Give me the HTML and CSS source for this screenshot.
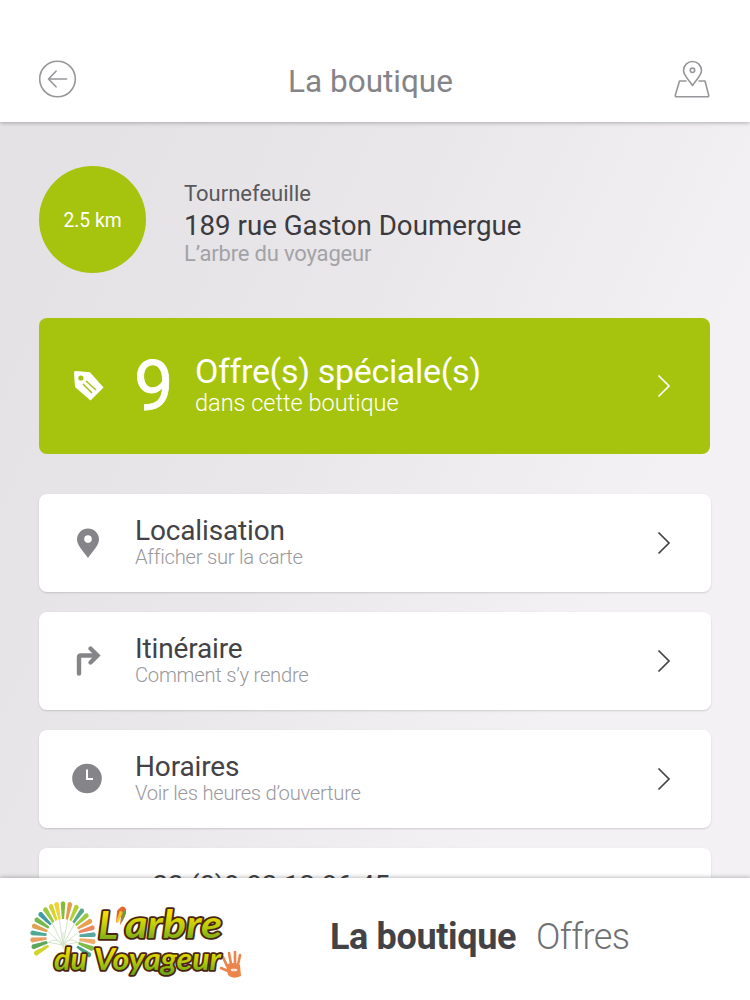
FILE: index.html
```html
<!DOCTYPE html>
<html lang="fr">
  <head>
    <meta charset="UTF-8" />
    <meta name="viewport" content="width=device-width, initial-scale=1.0" />
    <title>La boutique</title>
    <link rel="stylesheet" href="styles.css">
  </head>
  <body>
    <header class="topbar">
      <a href="#" class="back">
        <svg width="38" height="38" viewBox="0 0 38 38">
          <circle cx="18.5" cy="19" r="17.8" />
          <path d="M27.5 19H9.5M17 11.2L9.5 19l7.5 7.8" />
        </svg>
      </a>
      <h1>La boutique</h1>
      <a href="#" class="map">
        <svg width="36" height="38" viewBox="0 0 36 38">
          <path d="M12 21H5.5L1.3 35.2q-.3 1.6 1.2 1.6h31q1.5 0 1.2-1.6L31 21h-6" />
          <path d="M18.5 25.5C15 20.5 9.5 15 9.5 10.5a9 9 0 0 1 18 0c0 4.500-5.5 10-9 15z" />
          <circle cx="18.5" cy="10.3" r="2.2" />
        </svg>
      </a>
    </header>

    <main class="content">
      <section class="shop">
        <div class="distance">2.5 km</div>
        <div class="address">
          <p class="city">Tournefeuille</p>
          <p class="street">189 rue Gaston Doumergue</p>
          <p class="name">L’arbre du voyageur</p>
        </div>
      </section>

      <a href="#" class="offers">
        <svg class="tag" width="32" height="32" viewBox="0 0 32 32">
          <path fill="#fff" d="M1 2.5Q1 1 2.5 1L17 2.2 30.5 17.5 17.5 30.5 2 17z" />
          <circle cx="7.9" cy="8" r="2.6" fill="#a6c30e" />
          <path d="M13 11l10 9M10 14l9 9" stroke="#a6c30e" stroke-width="1.5" />
        </svg>
        <span class="count">9</span>
        <span class="text">
          <strong>Offre(s) spéciale(s)</strong>
          <small>dans cette boutique</small>
        </span>
        <svg class="arrow" width="14" height="24" viewBox="0 0 14 24"><path d="M1.5 1.5L12 12 1.5 22.5" /></svg>
      </a>

      <ul class="menu">
        <li>
          <a href="#">
            <svg class="icon" width="32" height="32" viewBox="0 0 32 32">
              <path fill-rule="evenodd" d="M17 1.5a11 11 0 0 1 11 11c0 6-6.5 12-11 18.5C12.5 24.5 6 18.5 6 12.5a11 11 0 0 1 11-11zM17 8.3a3.8 3.8 0 1 0 0 7.6 3.8 3.8 0 0 0 0-7.6z" />
            </svg>
            <span class="text"><strong>Localisation</strong><small>Afficher sur la carte</small></span>
            <svg class="arrow" width="14" height="24" viewBox="0 0 14 24"><path d="M1.5 1.5L12 12 1.5 22.5" /></svg>
          </a>
        </li>
        <li>
          <a href="#">
            <svg class="icon line" width="32" height="32" viewBox="0 0 32 32">
              <path d="M8 28.5V12.5q0-2 2-2H26" />
              <path d="M19.5 3.5L26.5 10.5 19.5 17.5" />
            </svg>
            <span class="text"><strong>Itinéraire</strong><small>Comment s’y rendre</small></span>
            <svg class="arrow" width="14" height="24" viewBox="0 0 14 24"><path d="M1.5 1.5L12 12 1.5 22.5" /></svg>
          </a>
        </li>
        <li>
          <a href="#">
            <svg class="icon" width="32" height="32" viewBox="0 0 32 32">
              <circle cx="16" cy="15.5" r="14.8" />
              <path d="M16 6.5V16h6" fill="none" stroke="#fff" stroke-width="2" />
            </svg>
            <span class="text"><strong>Horaires</strong><small>Voir les heures d’ouverture</small></span>
            <svg class="arrow" width="14" height="24" viewBox="0 0 14 24"><path d="M1.5 1.5L12 12 1.5 22.5" /></svg>
          </a>
        </li>
        <li>
          <a href="#" class="phone">+33 (0)9 83 12 86 45</a>
        </li>
      </ul>
    </main>

    <footer class="tabs">
      <svg class="logo" width="216" height="84" viewBox="0 0 216 84">
        <defs>
          <linearGradient id="leaf" x1="0" y1="0" x2="0" y2="1">
            <stop offset=".3" stop-color="#f3dc00" />
            <stop offset=".6" stop-color="#b5ca0a" />
            <stop offset=".9" stop-color="#6ba51c" />
          </linearGradient>
          <path id="ray" d="M-1.2-18L-2.5-34Q0-37.5 2.5-34L1.2-18z" />
        </defs>
        <!-- palm -->
        <g transform="translate(35 40)">
          <g class="stems">
            <path d="M0 8L-18-8M0 8L-12-16M0 8L-4-20M0 8L5-20M0 8L13-16M0 8L19-8M0 8L-22 4M0 8L22 4M0 12V-5" />
            <path d="M-20 10Q-6-4 0 10Q6-4 20 10" />
          </g>
          <g class="palm" transform="scale(.92 1)">
            <use href="#ray" fill="#d2d32b" transform="rotate(-119)" />
            <use href="#ray" fill="#5da75b" transform="rotate(-107)" />
            <use href="#ray" fill="#e8a064" transform="rotate(-95)" />
            <use href="#ray" fill="#4ca996" transform="rotate(-83)" />
            <use href="#ray" fill="#e0a34f" transform="rotate(-71)" />
            <use href="#ray" fill="#75b94b" transform="rotate(-59)" />
            <use href="#ray" fill="#3f9da0" transform="rotate(-47)" />
            <use href="#ray" fill="#9bc93d" transform="rotate(-35)" />
            <use href="#ray" fill="#d8d232" transform="rotate(-23)" />
            <use href="#ray" fill="#f0d431" transform="rotate(-12)" />
            <use href="#ray" fill="#84bc3a" />
            <use href="#ray" fill="#e79a4d" transform="rotate(13)" />
            <use href="#ray" fill="#b4cf35" transform="rotate(26)" />
            <use href="#ray" fill="#56a987" transform="rotate(38)" />
            <use href="#ray" fill="#9bca42" transform="rotate(50)" />
            <use href="#ray" fill="#e8a04f" transform="rotate(62)" />
            <use href="#ray" fill="#ed865c" transform="rotate(74)" />
            <use href="#ray" fill="#55a8a0" transform="rotate(86)" />
            <use href="#ray" fill="#efad69" transform="rotate(98)" />
            <use href="#ray" fill="#7dbb46" transform="rotate(110)" />
            <use href="#ray" fill="#47a17e" transform="rotate(122)" />
          </g>
        </g>
        <!-- hand -->
        <g class="hand">
          <path d="M199 69L195 60M203 67L201 56M207 67V55M210 68L212 58M200 74L193 71" />
          <path class="palm-fill" d="M198 68q7-4 14 0l1 11q-8 4-13-1z" />
          <path d="M204 73h4" stroke="#fbe3d2" />
        </g>
        <g class="lettering">
          <text x="70" y="42" textLength="20" lengthAdjust="spacingAndGlyphs">L</text>
          <text x="97" y="41" textLength="97" lengthAdjust="spacingAndGlyphs">arbre</text>
          <text class="second" x="26" y="73" textLength="33" lengthAdjust="spacingAndGlyphs">du</text>
          <text class="second" x="66" y="73" textLength="127" lengthAdjust="spacingAndGlyphs">Voyageur</text>
        </g>
        <!-- parrot used as the apostrophe -->
        <g>
          <path d="M89 14q6-8 9-2 1 6-6 16l1-9-5 7z" fill="#e5672e" />
          <path d="M92 14l3 1-5 11-2-1z" fill="#efcc25" />
          <path d="M95 12l3 4-4 9z" fill="#56a345" />
        </g>
      </svg>
      <nav>
        <a href="#" class="active">La boutique</a>
        <a href="#">Offres</a>
      </nav>
    </footer>
  </body>
</html>
```
FILE: styles.css
```css
* {
  margin: 0;
  padding: 0;
  box-sizing: border-box;
}
body {
  display: flex;
  flex-direction: column;
  height: 1000px;
  overflow: hidden;
  font-family: Roboto, "Liberation Sans", sans-serif;
  background-color: #fff;
}
a {
  text-decoration: none;
  color: #434246;
}
li {
  list-style: none;
}
svg {
  display: block;
  flex-shrink: 0;
}

/* header */
.topbar {
  z-index: 1;
  display: flex;
  justify-content: space-between;
  height: 122px;
  padding: 60px 40px 0 39px;
  background-color: #fff;
  box-shadow: 0 1px 4px rgba(0, 0, 0, 0.28);
}
.topbar svg {
  fill: none;
  stroke: #97969a;
  stroke-width: 1.6;
  stroke-linecap: round;
  stroke-linejoin: round;
}
.topbar h1 {
  padding-right: 10px;
  line-height: 43px;
  font-size: 31.5px;
  font-weight: 400;
  color: #858488;
}

/* content */
.content {
  flex: 1;
  min-height: 0;
  overflow: hidden;
  padding: 44px 39px 0;
  background: linear-gradient(115deg, #e4e2e5 10%, #e9e7ea 40%, #f3f1f4 75%);
}
.shop {
  display: flex;
  column-gap: 38px;
  height: 151.5px;
}
.distance {
  width: 107px;
  height: 107px;
  border-radius: 50%;
  background-color: #a6c30e;
  color: #fff;
  font-size: 19.3px;
  line-height: 110px;
  text-align: center;
}
.address {
  padding-top: 13px;
}
.city {
  font-size: 22px;
  line-height: 29px;
  color: #59585c;
}
.street {
  font-size: 27.7px;
  line-height: 36px;
  color: #3b3a3e;
}
.name {
  font-size: 22px;
  letter-spacing: -0.17px;
  line-height: 20px;
  color: #a3a2a6;
}

.offers {
  display: flex;
  align-items: center;
  width: 671px;
  height: 136.5px;
  padding: 0 39px 0 34px;
  border-radius: 8px;
  background-color: #a6c30e;
  color: #fff;
}
.count {
  width: 88px;
  padding-left: 29px;
  font-size: 70px;
  line-height: 136px;
  -webkit-text-stroke: 0.8px #fff;
}
.text {
  flex: 1;
}
.text strong,
.text small {
  display: block;
  white-space: nowrap;
}
.offers .text {
  padding: 0 0 3px 2px;
}
.offers strong {
  font-size: 34px;
  font-weight: 400;
  letter-spacing: -0.33px;
  line-height: 38px;
}
.offers small {
  font-size: 23.5px;
  font-weight: 300;
  line-height: 26px;
}
.arrow {
  fill: none;
  stroke: #434246;
  stroke-width: 1.7;
}
.offers .arrow {
  stroke: #fff;
}

.menu {
  display: flex;
  flex-direction: column;
  row-gap: 20px;
  padding-top: 40px;
}
.menu li {
  height: 98px;
  border-radius: 8px;
  background-color: #fff;
  box-shadow: 0 1px 2px rgba(0, 0, 0, 0.15);
}
.menu a {
  display: flex;
  align-items: center;
  height: 97px;
  padding: 0 40px 0 32px;
}
.menu .icon {
  margin-right: 32px;
  fill: #858488;
}
.menu .line {
  fill: none;
  stroke: #858488;
  stroke-width: 4.4;
  stroke-linecap: round;
}
.menu .text {
  padding-bottom: 1px;
}
.menu strong {
  font-size: 28px;
  font-weight: 400;
  letter-spacing: -0.15px;
  line-height: 30px;
}
.menu small {
  font-size: 20.2px;
  font-weight: 300;
  letter-spacing: -0.25px;
  line-height: 22px;
  color: #99989c;
}
.menu .phone {
  align-items: flex-start;
  padding: 22px 0 0 98px;
  font-size: 28px;
  letter-spacing: -0.3px;
  line-height: 32px;
}

/* footer */
.tabs {
  z-index: 1;
  display: flex;
  height: 122px;
  padding: 19px 0 0 28px;
  background-color: #fff;
  box-shadow: 0 -1px 4px rgba(0, 0, 0, 0.25);
}
.tabs nav {
  display: flex;
  column-gap: 20px;
  padding-left: 86px;
  font-size: 36px;
  line-height: 80px;
}
.tabs nav a {
  font-weight: 300;
  letter-spacing: -0.6px;
  color: #707073;
}
.tabs nav .active {
  font-weight: 700;
  letter-spacing: -0.36px;
  color: #434246;
}
.stems {
  fill: none;
  stroke: #d3e5c9;
  stroke-width: 1;
}
.lettering {
  font-family: Lato, sans-serif;
  font-size: 39px;
  font-style: italic;
  font-weight: 700;
  fill: url(#leaf);
  stroke: #4a240c;
  stroke-width: 3.6;
  stroke-linejoin: round;
  paint-order: stroke;
}
.second {
  font-size: 31px;
}
.hand {
  fill: none;
  stroke: #ec854c;
  stroke-width: 2.6;
  stroke-linecap: round;
}
.hand .palm-fill {
  fill: #ec854c;
  stroke: none;
}
```
